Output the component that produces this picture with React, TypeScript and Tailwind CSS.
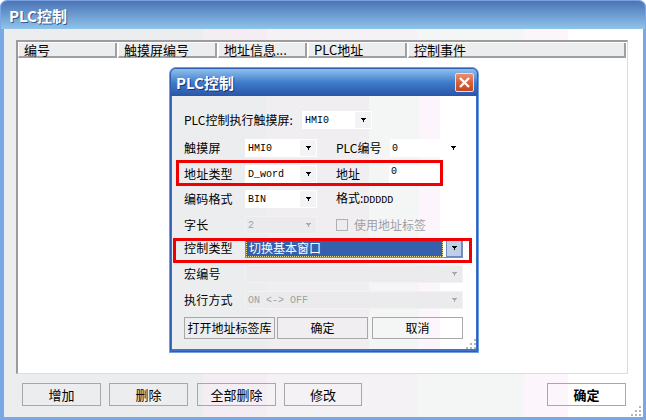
const cjk = "font-['Noto_Sans_CJK_SC',sans-serif] text-[12px] leading-none text-black";
const big = "font-['Noto_Sans_CJK_SC',sans-serif] text-[13px] leading-none text-black";
const mono = "font-['Liberation_Mono',monospace] text-[10px]";

function Arrow({ muted = false }: { muted?: boolean }) {
  return (
    <svg width="5" height="4" viewBox="0 0 5 4" className="block">
      <path d="M0 0h5v1h-1v1h-1v2h-1v-2h-1v-1h-1z" fill={muted ? "#a8a8a8" : "#000"} />
    </svg>
  );
}

function Select({ value, width, disabled = false, plain = false }: { value?: string; width: string; disabled?: boolean; plain?: boolean }) {
  return (
    <div className={`${width} h-[18px] flex items-center shrink-0 border ${disabled ? "bg-[#ebebed] border-[#f2f2f4]" : plain ? "border-transparent bg-[linear-gradient(90deg,#fff_0,#fff_50px,transparent_50px)]" : "bg-white border-white"}`}>
      <span className={`${mono} flex-1 pl-[2px] ${disabled ? "text-[#a0a0a0]" : "text-black"}`}>{value}</span>
      <span className={`w-[16px] h-full flex items-center justify-center ${disabled || plain ? "" : "bg-[#f3f3f5]"}`}>
        <Arrow muted={disabled} />
      </span>
    </div>
  );
}

function Label({ children, w = "w-[61px]" }: { children: React.ReactNode; w?: string }) {
  return <span className={`${cjk} ${w} shrink-0 -mt-[1px] tracking-[0.2px]`}>{children}</span>;
}

function Col({ children, w, grow = false }: { children: React.ReactNode; w?: string; grow?: boolean }) {
  return (
    <div className={`${w ?? ""} ${grow ? "flex-1" : ""} h-[15px] flex items-center pl-[5px] mr-[1px] bg-[#ecedef] border-r-2 border-b-2 border-[#a0a0a4] border-l border-l-white`}>
      <span className={`${big} whitespace-nowrap`}>{children}</span>
    </div>
  );
}

function Btn({ children, w, cls = "", h = "h-[23px]", font = big }: { children: React.ReactNode; w: string; cls?: string; h?: string; font?: string }) {
  return (
    <div className={`${w} ${h} shrink-0 border border-[#a8a8a8] flex items-center justify-center ${font} ${cls}`}>{children}</div>
  );
}

function Grip({ cls }: { cls: string }) {
  return (
    <svg width="12" height="12" viewBox="0 0 12 12" className={cls}>
      <g fill="#b4b4b8">
        <rect x="8" y="0" width="2" height="2" />
        <rect x="4" y="4" width="2" height="2" />
        <rect x="8" y="4" width="2" height="2" />
        <rect x="0" y="8" width="2" height="2" />
        <rect x="4" y="8" width="2" height="2" />
        <rect x="8" y="8" width="2" height="2" />
      </g>
    </svg>
  );
}

function Dialog() {
  return (
    <div className="absolute left-[170px] top-[67px] w-[308px] h-[284px] flex flex-col rounded-t-[6px] border border-[#2f5cae] bg-[#3f72c8] shadow-[0_0_0_1px_#6f9fe0]">
      <div className="h-[27px] shrink-0 flex items-center justify-between pl-[5px] pr-[3px] rounded-t-[5px] bg-gradient-to-b from-[#8fc0ec] via-[#3f7ccc] to-[#2a55a8]">
        <span className="font-['Noto_Sans_CJK_SC',sans-serif] text-[15px] font-bold leading-none text-white [text-shadow:1px_1px_0_#1a3070]">PLC控制</span>
        <div className="w-[19px] h-[19px] rounded-[2px] border border-[#e8e0e0] bg-gradient-to-b from-[#e89070] via-[#d8603c] to-[#c04820] flex items-center justify-center">
          <svg width="13" height="13" viewBox="0 0 13 13">
            <path d="M2 2l9 9M11 2l-9 9" stroke="#fff" strokeWidth="2.4" />
          </svg>
        </div>
      </div>
      <div className="relative flex-1 mx-[1px] mb-[2px] flex flex-col pl-[12px] pt-[15px] bg-[linear-gradient(90deg,#ecedef_0,#ecedef_95px,#f1eef2_95px,#f1eef2_197px,#f4f6f5_197px,#f4f6f5_247px,#fcf6fc_247px,#fcf6fc_268px,#fff_268px)]">
        <div className="flex items-center h-[18px]">
          <span className={`${cjk} w-[118px] shrink-0`}>PLC控制执行触摸屏:</span>
          <Select value="HMI0" width="w-[70px]" />
        </div>
        <div className="flex items-center h-[18px] mt-[10px]">
          <Label>触摸屏</Label>
          <Select value="HMI0" width="w-[72px]" />
          <span className={`${cjk} w-[53px] ml-[19px] shrink-0`}>PLC编号</span>
          <Select value="0" width="w-[73px]" plain />
        </div>
        <div className="flex items-center h-[18px] mt-[8px]">
          <Label>地址类型</Label>
          <Select value="D_word" width="w-[72px]" />
          <span className={`${cjk} w-[53px] ml-[19px] shrink-0`}>地址</span>
          <div className={`${mono} w-[51px] h-[18px] bg-white pl-[2px] text-black leading-[14px]`}>0</div>
        </div>
        <div className="flex items-center h-[18px] mt-[7px]">
          <Label>编码格式</Label>
          <Select value="BIN" width="w-[72px]" />
          <span className={`${cjk} ml-[19px]`}>格式:<span className={mono}>DDDDD</span></span>
        </div>
        <div className="flex items-center h-[18px] mt-[8px]">
          <Label>字长</Label>
          <Select value="2" width="w-[72px]" disabled />
          <span className="w-[12px] h-[12px] ml-[19px] shrink-0 border border-[#b0b0b0] bg-[#ecedef]" />
          <span className={`${cjk} !text-[#a0a0a0] ml-[6px]`}>使用地址标签</span>
        </div>
        <div className="flex items-center h-[18px] mt-[5px]">
          <Label>控制类型</Label>
          <div className="w-[218px] h-[19px] flex bg-white border border-[#7090c0]">
            <span className={`${cjk} flex-1 !text-white bg-[#3560ae] border border-dotted border-[#e8d890] flex items-center pl-[2px]`}>切换基本窗口</span>
            <span className="w-[16px] ml-[3px] bg-[#c0cfe8] border border-[#6a8ac0] flex items-center justify-center"><Arrow /></span>
          </div>
        </div>
        <div className="flex items-center h-[18px] mt-[8px]">
          <Label>宏编号</Label>
          <Select width="w-[218px]" disabled />
        </div>
        <div className="flex items-center h-[18px] mt-[8px]">
          <Label>执行方式</Label>
          <Select value="ON <-> OFF" width="w-[218px]" disabled />
        </div>
        <div className="flex h-[22px] mt-[8px]">
          <Btn w="w-[91px]" h="h-[22px]" font={cjk}>打开地址标签库</Btn>
          <Btn w="w-[91px]" h="h-[22px]" font={cjk} cls="ml-[2px]">确定</Btn>
          <Btn w="w-[91px]" h="h-[22px]" font={cjk} cls="ml-[4px]">取消</Btn>
        </div>
        <Grip cls="absolute right-[-2px] bottom-[-2px]" />
        <div className="absolute left-[4px] top-[64px] w-[267px] h-[26px] border-[3px] border-[#f00000]" />
        <div className="absolute left-[1px] top-[142px] w-[299px] h-[25px] border-[3px] border-[#f00000]" />
      </div>
    </div>
  );
}

export default function App() {
  return (
    <div className="relative w-[646px] h-[420px] overflow-hidden flex flex-col rounded-t-[7px] bg-[#7aa8e4] pl-[4px] pr-[3px] pb-[3px] border-t border-[#7aa0e0]">
      <div className="h-[28px] -ml-[3px] -mr-[2px] pl-[8px] shrink-0 flex items-center rounded-t-[6px] bg-gradient-to-b from-[#4b74b6] to-[#90c4ea]">
        <span className="font-['Noto_Sans_CJK_SC',sans-serif] text-[15px] font-bold leading-none text-white [text-shadow:1px_1px_0_#3a5a90]">PLC控制</span>
      </div>
      <div className="relative flex-1 flex flex-col pl-[12px] pr-[15px] pt-[11px] bg-[linear-gradient(90deg,#ecedef_0,#ecedef_199px,#f4edf3_199px,#f4edf3_263px,#f5f2f5_263px,#f5f2f5_414px,#f4f6f5_414px,#f4f6f5_520px,#fcf6fc_520px,#fcf6fc_564px,#fff_564px)]">
        <div className="h-[334px] flex flex-col bg-white border-l-2 border-t-2 border-[#9c9c9f] border-r border-b border-r-[#dcdce0] border-b-[#dcdce4]">
          <div className="flex pt-[1px]">
            <Col w="w-[99px]">编号</Col>
            <Col w="w-[99px]">触摸屏编号</Col>
            <Col w="w-[89px]">地址信息...</Col>
            <Col w="w-[99px]">PLC地址</Col>
            <Col grow>控制事件</Col>
          </div>
        </div>
        <div className="flex mt-[9px] pl-[6px] pr-[2px]">
          <Btn w="w-[79px]">增加</Btn>
          <Btn w="w-[79px]" cls="ml-[8px]">删除</Btn>
          <Btn w="w-[79px]" cls="ml-[9px]">全部删除</Btn>
          <Btn w="w-[78px]" cls="ml-[8px]">修改</Btn>
          <Btn w="w-[79px]" cls="ml-auto !font-bold">确定</Btn>
        </div>
        <Grip cls="absolute right-[0px] bottom-[-1px]" />
      </div>
      <Dialog />
    </div>
  );
}
